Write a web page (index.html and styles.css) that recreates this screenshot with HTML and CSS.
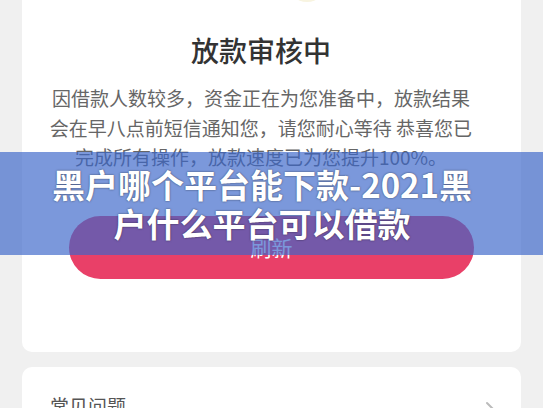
FILE: index.html
```html
<!DOCTYPE html>
<html lang="zh-CN">
<head>
    <meta charset="UTF-8">
    <meta name="viewport" content="width=device-width, initial-scale=1.0">
    <title>放款审核中</title>
    <link rel="stylesheet" href="styles.css">
</head>
<body>
    <div class="page">
        <div class="card status-card">
            <div class="status-icon"></div>
            <h1 class="status-title">放款审核中</h1>
            <p class="status-text">因借款人数较多，资金正在为您准备中，放款结果会在早八点前短信通知您，请您耐心等待 恭喜您已完成所有操作，放款速度已为您提升100%。</p>
            <button class="refresh-btn">刷新</button>
        </div>

        <div class="card faq-card">
            <div class="faq-row">
                <span class="faq-title">常见问题</span>
                <svg class="chevron" width="10" height="16" viewBox="0 0 10 16">
                    <polyline points="2,2 8,8 2,14" fill="none" stroke="#bbbbbb" stroke-width="2" stroke-linecap="round" stroke-linejoin="round"/>
                </svg>
            </div>
        </div>
    </div>

    <div class="banner">
        <div class="banner-text">黑户哪个平台能下款-2021黑户什么平台可以借款</div>
    </div>
</body>
</html>
```

FILE: styles.css
```css
body {
    margin: 0;
    padding: 0;
    background: #f0f0f0;
    font-family: "Noto Sans CJK SC", "Noto Sans", sans-serif;
    overflow: hidden;
}

.page {
    padding: 0 22px;
}

.card {
    background: #fff;
    border-radius: 10px;
}

.status-card {
    border-radius: 0 0 10px 10px;
    padding: 0 0 73px;
    display: flex;
    flex-direction: column;
    align-items: center;
}

.status-icon {
    width: 40px;
    height: 40px;
    margin: -38px 0 0 71px;
    border-radius: 50%;
    background: #f8f4e0;
}

.status-title {
    margin: 28px 0 0;
    padding: 0 21px 0 0;
    font-size: 28px;
    line-height: 40px;
    font-weight: 500;
    color: #333;
}

.status-text {
    margin: 13px 0 0;
    padding: 0 43px 0 22px;
    box-sizing: border-box;
    width: 100%;
    font-size: 19px;
    line-height: 29.5px;
    color: #666;
    text-align: center;
}

.refresh-btn {
    margin-top: 44px;
    width: 405px;
    height: 63px;
    border: none;
    border-radius: 32px;
    background: #e94068;
    color: #fff;
    font-family: inherit;
    font-size: 21px;
}

.faq-card {
    margin-top: 15px;
    height: 90px;
}

.faq-row {
    display: flex;
    justify-content: space-between;
    align-items: flex-start;
    padding: 25px 26px 0 28px;
}

.faq-title {
    font-size: 19px;
    line-height: 28px;
    color: #555;
}

.chevron {
    margin-top: 9px;
}

.banner {
    position: absolute;
    top: 152px;
    left: 0;
    width: 543px;
    height: 103px;
    background: rgba(58, 101, 201, 0.67);
    display: flex;
    align-items: center;
    box-sizing: border-box;
    padding: 0 66px 0 47px;
}

.banner-text {
    width: 100%;
    text-align: center;
    color: #fff;
    font-size: 33px;
    line-height: 39px;
    font-weight: 700;
    text-shadow: 0 0 2px rgba(0, 0, 0, 0.6);
}
```
